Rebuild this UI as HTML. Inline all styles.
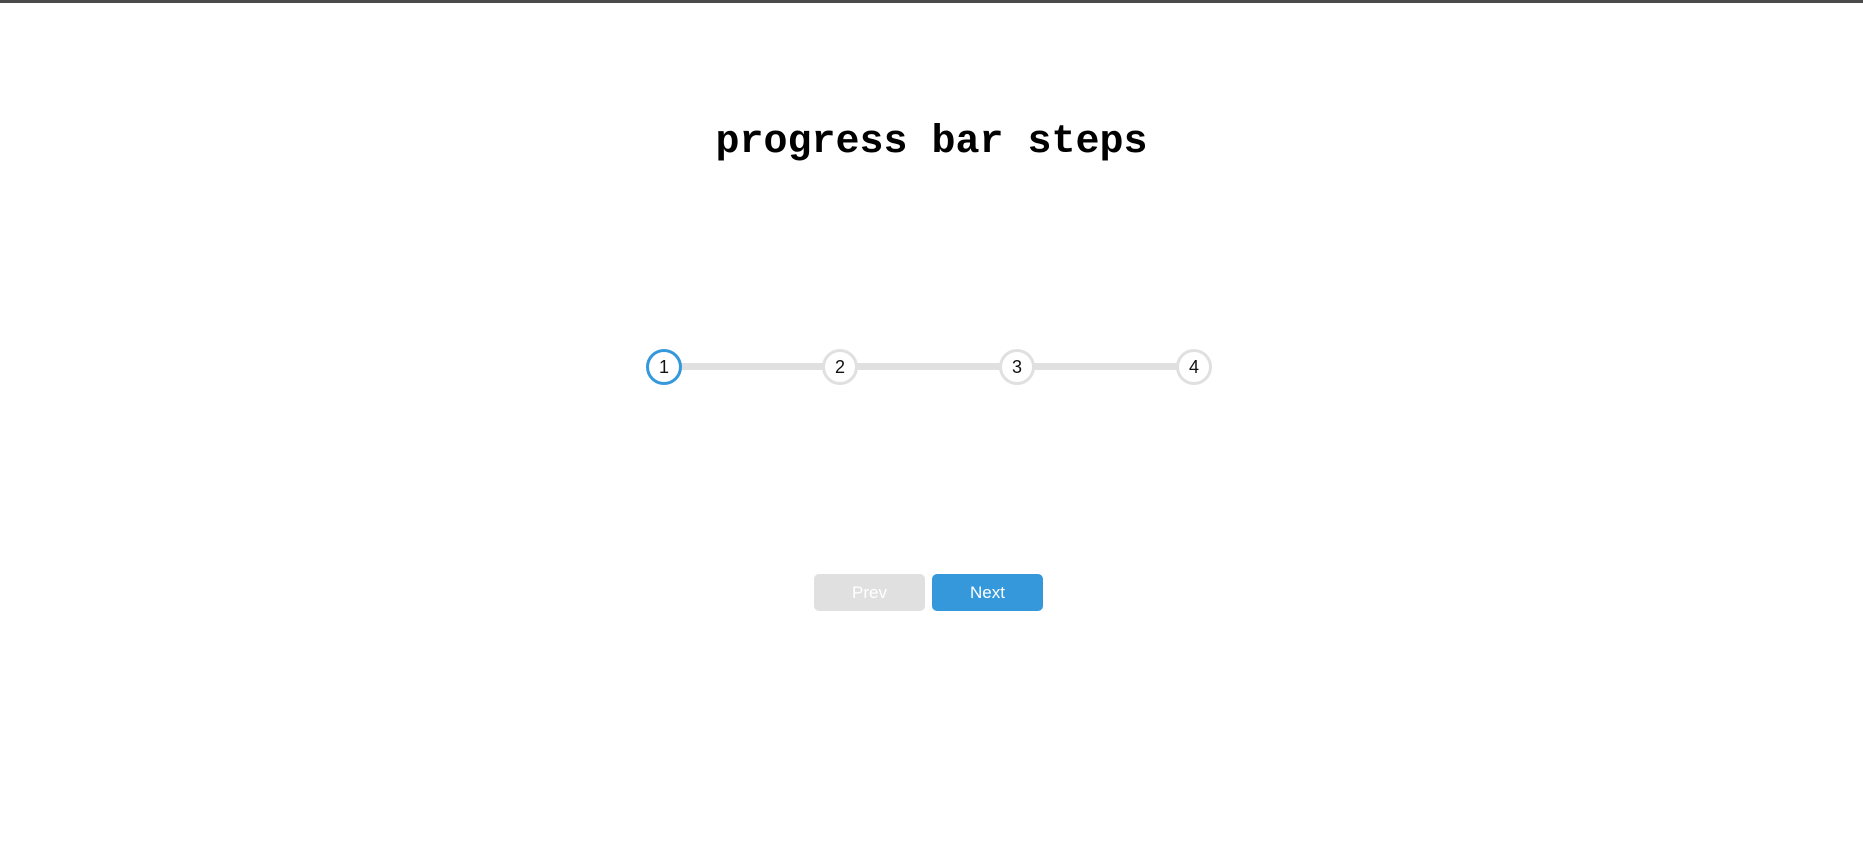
<!DOCTYPE html>
<html><head><style>
html,body{margin:0;padding:0;background:#fff;width:1863px;height:866px;overflow:hidden;position:relative;font-family:"Liberation Sans",sans-serif}
.top{position:absolute;left:0;top:0;width:1863px;height:3px;background:#4a4a4a}
h1{position:absolute;left:0;width:1863px;top:117px;margin:0;text-align:center;font:bold 40px "Liberation Mono","Courier New",monospace;line-height:52px;color:#000}
.line{position:absolute;left:664px;width:530px;top:363px;height:7px;background:#e0e0e0}
.c{position:absolute;top:349px;width:30px;height:30px;border:3px solid #e0e0e0;border-radius:50%;background:#fff;text-align:center;line-height:30px;font-size:18px;color:#111}
.c.a{border-color:#3498db}
.b{position:absolute;top:574px;width:111px;height:37px;border-radius:5px;color:#fff;text-align:center;line-height:37px;font-size:17px}
</style></head><body>
<div class="top"></div>
<h1>progress bar steps</h1>
<div class="line"></div>
<div class="c a" style="left:646px">1</div>
<div class="c" style="left:822px">2</div>
<div class="c" style="left:999px">3</div>
<div class="c" style="left:1176px">4</div>
<div class="b" style="left:814px;background:#e0e0e0">Prev</div>
<div class="b" style="left:932px;background:#3498db">Next</div>
</body></html>
